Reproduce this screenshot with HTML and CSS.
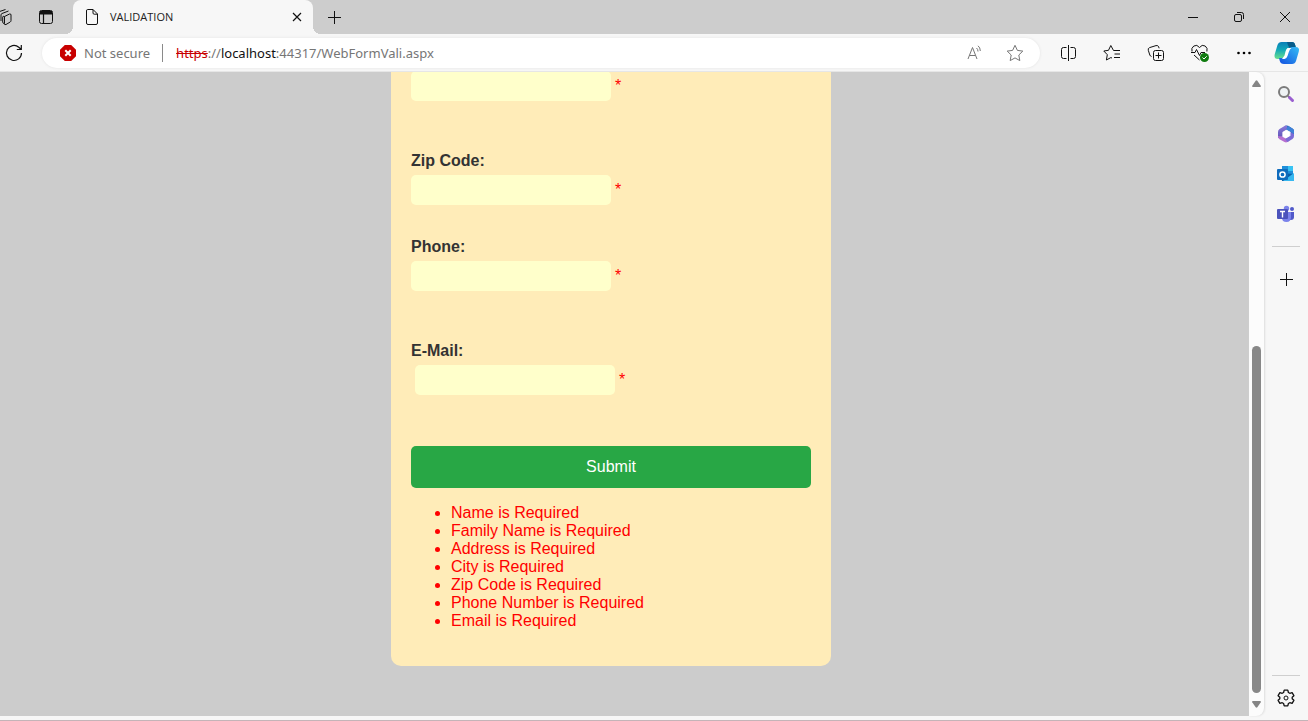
FILE: index.html
```html
<!DOCTYPE html>
<html lang="en">
<head>
<meta charset="utf-8">
<title>VALIDATION</title>
<link rel="stylesheet" href="styles.css">
</head>
<body>
<header class="titlebar">
  <button class="workspaces" aria-label="Workspaces"><svg width="24" height="20" viewBox="0 0 24 20" class="line"><path d="M14.500 9.500l5-2.500q1.500-.5 1.500 1v5.500q0 1-.8 1.500l-4.200 2.500q-1.500.6-1.500-.8zM14.500 9.500q-1.800-.8-1.800.6v5q0 1 1.800 2M11 14V8q0-1 .8-1.400L18.500 4M8.500 12V6q0-1 .8-1.400L15.500 2.500"/></svg></button>
  <button class="tab-actions" aria-label="Tab actions"><svg width="16" height="16" viewBox="0 0 16 16" class="line"><rect x="1.500" y="1.500" width="13" height="13" rx="2"/><path d="M5.500 5v9" stroke-width="1.200"/><path d="M2 2h12v3.500H2z" fill="#111" stroke="none"/></svg></button>
  <div class="tab">
    <svg width="14" height="18" viewBox="0 0 14 18" class="line"><path d="M2.500 1.500H8L12.500 6v9q0 1.500-1.500 1.500H3Q1.500 16.500 1.500 15V3Q1.500 1.500 2.500 1.500zM8 1.500V5q0 1.200 1.200 1.200h3.300"/></svg>
    <span class="tab-title">VALIDATION</span>
    <button class="tab-close" aria-label="Close tab"><svg width="12" height="12" viewBox="0 0 12 12" class="line"><path d="M2 2l8 8M10 2l-8 8" stroke-width="1.200"/></svg></button>
  </div>
  <button class="new-tab" aria-label="New tab"><svg width="15" height="15" viewBox="0 0 15 15" class="line"><path d="M7.500 1v13M1 7.500h13"/></svg></button>
  <div class="window-controls">
    <button aria-label="Minimize"><svg width="12" height="12" viewBox="0 0 12 12" class="line"><path d="M1 6.500h10"/></svg></button>
    <button aria-label="Restore"><svg width="12" height="12" viewBox="0 0 12 12" class="line"><rect x="1.500" y="3.500" width="7" height="7" rx="1.500"/><path d="M4 1.500h4.500q2 0 2 2V8"/></svg></button>
    <button aria-label="Close"><svg width="12" height="12" viewBox="0 0 12 12" class="line"><path d="M1 1l10 10M11 1L1 11"/></svg></button>
  </div>
</header>

<nav class="toolbar" aria-label="Browser toolbar">
  <button class="refresh" aria-label="Refresh"><svg width="20" height="20" viewBox="0 0 20 20" class="line"><path d="M17.500 10a7.500 7.500 0 1 1-2.700-5.800L17 6.300M17.300 2v4.500H12.800" stroke-width="1.200"/></svg></button>
  <div class="address-bar">
    <svg width="16" height="16" viewBox="0 0 16 16"><path d="M4.800 0h6.400L16 4.800v6.400L11.200 16H4.800L0 11.200V4.800z" fill="#c80000"/><path d="M5.300 5.300l5.400 5.400M10.700 5.300l-5.400 5.400" stroke="#fff" stroke-width="2"/></svg>
    <span class="security">Not secure</span>
    <div class="url" role="textbox" aria-label="Address" contenteditable="true" spellcheck="false"><s>https</s>://<b>localhost</b>:44317/WebFormVali.aspx</div>
    <button aria-label="Read aloud"><svg width="18" height="18" viewBox="0 0 18 18" class="line muted"><path d="M2 15L6.500 3.500 11 15M3.600 11.500h5.800M10.500 4q1.500 1.200 1.500 3.500M12 1.800q2.300 1.700 2.300 5.200"/></svg></button>
    <button aria-label="Add to favorites"><svg width="18" height="18" viewBox="0 0 18 18" class="line muted"><path d="M9 1.300l2.400 5.100 5.400.7-4 3.900 1 5.600L9 13.900l-4.800 2.700 1-5.600-4-3.900 5.400-.7z"/></svg></button>
  </div>
  <button aria-label="Split screen"><svg width="17" height="18" viewBox="0 0 17 18" class="line"><path d="M6.500 3.500h-3q-2 0-2 2v7q0 2 2 2h3M10.500 3.500h3q2 0 2 2v7q0 2-2 2h-3M8.500 1v16"/></svg></button>
  <button aria-label="Favorites"><svg width="18" height="18" viewBox="0 0 18 18" class="line"><path d="M17 6.500h-6.500L7.800 1.500 5.500 6.300l-4.700.7 3.500 3.700-.9 5.300 4.400-2.400 1.200.4M11.500 10h5.500M11 13.500h6" stroke-linejoin="round"/></svg></button>
  <button aria-label="Collections"><svg width="18" height="18" viewBox="0 0 18 18" class="line"><rect x="6.500" y="6.500" width="10" height="10" rx="2"/><path d="M11.500 8.500v6M8.500 11.500h6M4.500 12.500q-1.200-.3-1.700-1.500L1.300 6.300q-.6-2 1.300-2.700L9 1.600q2-.6 2.700 1.300l.4 1.400"/></svg></button>
  <button aria-label="Browser essentials"><svg width="20" height="20" viewBox="0 0 20 20" class="line"><path d="M9.500 4.500Q7 1 3.800 3 .9 5 2 8.500M9.500 4.500Q12 1 15.200 3q2.800 2 1.700 5.500M1 9.500h4l1.500-3 3 6 1.500-3h4M4 12l5.500 5"/><circle cx="14.500" cy="14.500" r="4.500" fill="#107c10" stroke="none"/><path d="M12.500 14.500l1.500 1.500 2.700-2.700" stroke="#fff"/></svg></button>
  <button aria-label="Settings and more"><svg width="16" height="16" viewBox="0 0 16 16"><circle cx="2.500" cy="8" r="1.300"/><circle cx="8" cy="8" r="1.300"/><circle cx="13.500" cy="8" r="1.300"/></svg></button>
  <button class="copilot" aria-label="Copilot"><svg width="26" height="24" viewBox="0 0 26 24"><defs><linearGradient id="cop-a" x1="0" y1="0" x2="0" y2="1"><stop offset="0" stop-color="#0a7fb8"/><stop offset=".45" stop-color="#12a8b8"/><stop offset="1" stop-color="#6be08c"/></linearGradient><linearGradient id="cop-b" x1="1" y1="0" x2="0" y2="1"><stop offset="0" stop-color="#35bdf5"/><stop offset="1" stop-color="#1450e0"/></linearGradient></defs><path d="M7.500 1H18q2.500 0 3.200 3l1 4H17q-2.500 0-3.500 3l-1.500 4q-1 3-4 3H3.500Q-.4 18 .8 13L3.500 4Q4.500 1 7.500 1z" fill="url(#cop-a)"/><path d="M13 1h5q2.500 0 3.200 3l1 4H17q-2.500-1-4-7z" fill="#085c8a"/><path d="M18.500 6h3q4.500 0 3.300 4.500L22 20q-1 3-4 3h-8q-3.500 0-4.200-3L5 17h3q3 0 4-3l1.500-4Q15 6 18.500 6z" fill="url(#cop-b)"/><path d="M13.500 7h4q-1.800 1-2.700 4l-1.300 4q-.8 2.500-3 3H8l2.500-3.500 1-4Q12 8 13.500 7z" fill="#fff"/></svg></button>
</nav>

<div class="workspace">
  <main class="viewport">
    <form class="form-card">
      <div class="field spaced"><div class="entry"><input type="text" aria-label="City"><span class="error">*</span></div></div>
      <div class="field"><label for="zip">Zip Code:</label><div class="entry"><input id="zip" type="text"><span class="error">*</span></div></div>
      <div class="field spaced"><label for="phone">Phone:</label><div class="entry"><input id="phone" type="text"><span class="error">*</span></div></div>
      <div class="field spaced"><label for="email">E-Mail:</label><div class="entry indented"><input id="email" type="text"><span class="error">*</span></div></div>
      <button class="submit" type="button">Submit</button>
      <ul class="summary">
        <li>Name is Required</li>
        <li>Family Name is Required</li>
        <li>Address is Required</li>
        <li>City is Required</li>
        <li>Zip Code is Required</li>
        <li>Phone Number is Required</li>
        <li>Email is Required</li>
      </ul>
    </form>
  </main>
  <div class="scrollbar" aria-hidden="true">
    <svg width="9" height="8" viewBox="0 0 9 8"><path d="M3.700.7q.8-.9 1.600 0l3.500 5q.5 1.300-.8 1.300H1Q-.3 7 .2 5.700z" fill="#858585"/></svg>
    <div class="track"><div class="thumb"></div></div>
    <svg width="9" height="8" viewBox="0 0 9 8"><path d="M3.700 7.300q.8.900 1.600 0l3.500-5Q9.300 1 8 1H1Q-.3 1 .2 2.300z" fill="#858585"/></svg>
  </div>
  <aside class="sidebar" aria-label="Sidebar">
    <button aria-label="Search"><svg width="18" height="18" viewBox="0 0 18 18"><circle cx="7" cy="7" r="5" fill="#eef2f4" stroke="#7b7b7b" stroke-width="2"/><path d="M11 11l1.500 1.500" stroke="#777" stroke-width="2"/><path d="M12.500 12.500l3 3" stroke="#9a5fd0" stroke-width="3" stroke-linecap="round"/></svg></button>
    <button aria-label="Microsoft 365"><svg width="18" height="18" viewBox="0 0 18 18"><defs><linearGradient id="m-a" x1="0" y1="0" x2="0" y2="1"><stop offset="0" stop-color="#8a78d8"/><stop offset="1" stop-color="#5f55b8"/></linearGradient></defs><path d="M8 .8q1.500-.6 3 0L15.500 3.500Q17 4.300 17 6v5l-3-1V7L7 3z" fill="#2b62b4"/><path d="M8 .8L2.500 4Q1 5 1 7v6l4.500-1.500V7L10 4.300V.8z" fill="url(#m-a)"/><path d="M1 11q0 2.300 1.500 3.200l5 2.800q1.500.8 3 0l2-1.200V12L9 13.800 5 11.500z" fill="#b66fd0"/><path d="M17 9v2q0 2-1.500 3l-5 3L8 14l5.500-3.200V7z" fill="#7b6cd6"/><path d="M11 .8l4.500 2.700Q17 4.300 17 6v3l-3-2-5-2.800z" fill="#3e82d8"/><path d="M9 5.500l3.300 1.700v3.900L9 13l-3.300-1.900V7.200z" fill="#fff"/></svg></button>
    <button aria-label="Outlook"><svg width="18" height="18" viewBox="0 0 18 18"><path d="M5 1h11v9H5z" fill="#1e8fda"/><path d="M11 1h5v5h-5z" fill="#38c3f3"/><path d="M4 8l13 1v7H5z" fill="#0a5fa8"/><path d="M17 8v8H6z" fill="#37b8f0"/><rect y="4" width="11" height="11" rx="1" fill="#0f6cbd"/><circle cx="5.500" cy="9.500" r="2.600" fill="none" stroke="#fff" stroke-width="1.500"/></svg></button>
    <button aria-label="Teams"><svg width="18" height="18" viewBox="0 0 18 18"><circle cx="9.500" cy="3.500" r="2.700" fill="#7b83eb"/><circle cx="15" cy="4" r="2" fill="#5059c9"/><path d="M12 7h5v5q0 3-3 3h-2z" fill="#5059c9"/><path d="M5 7h9v5q0 5-4.500 5T5 13z" fill="#7b83eb"/><rect y="4" width="11" height="10" rx="1" fill="#4b53bc"/><path d="M3 6.500h5M5.500 6.500v6" stroke="#fff" stroke-width="1.400"/></svg></button>
    <hr>
    <button class="add" aria-label="Customize"><svg width="13" height="13" viewBox="0 0 13 13" class="line"><path d="M6.500 0v13M0 6.500h13"/></svg></button>
    <hr class="bottom-rule">
    <button class="settings" aria-label="Settings"><svg width="18" height="18" viewBox="0 0 18 18" class="line"><path d="M7.200 1.200h3.600l.6 2.300 1.400.8 2.300-.7 1.800 3.100L15.200 8.300v1.400l1.700 1.600-1.800 3.100-2.300-.7-1.400.8-.6 2.300H7.200l-.6-2.300-1.400-.8-2.300.7-1.800-3.100 1.700-1.600V8.300L1.100 6.700l1.800-3.100 2.300.7 1.400-.8z" stroke-width="1.300" stroke-linejoin="round"/><circle cx="9" cy="9" r="2"/></svg></button>
  </aside>
</div>
</body>
</html>
```
FILE: styles.css
```css
* { box-sizing: border-box; }

body {
  margin: 0;
  height: 100vh;
  display: flex;
  flex-direction: column;
  overflow: hidden;
  background: #f7f7f7;
  border-bottom: 1px solid #c4b4b8;
  font-family: "Noto Sans", "Open Sans", sans-serif;
}

button {
  display: flex;
  align-items: center;
  justify-content: center;
  padding: 0;
  border: 0;
  background: none;
  flex: none;
}

svg { display: block; flex: none; }

.line { fill: none; stroke: #111; stroke-width: 1; }
.muted { stroke: #767676; }

/* Title bar */
.titlebar {
  display: flex;
  height: 34px;
  flex: none;
  background: #cdcdcd;
}

.workspaces { width: 28px; justify-content: flex-end; margin-left: -14px; }
.tab-actions { width: 32px; margin: 0 19px 0 16px; justify-content: center; }

.tab {
  position: relative;
  display: flex;
  align-items: center;
  width: 240px;
  margin-left: -8px;
  padding: 0 8px 0 12px;
  gap: 11px;
  border-radius: 8px 8px 0 0;
  background: #f7f7f7;
}

.tab::before,
.tab::after {
  content: "";
  position: absolute;
  bottom: 0;
  width: 8px;
  height: 8px;
}

.tab::before { right: 100%; background: radial-gradient(circle at 0 0, transparent 8px, #f7f7f7 8px); }
.tab::after { left: 100%; background: radial-gradient(circle at 100% 0, transparent 8px, #f7f7f7 8px); }

.tab-title { flex: 1; font-family: "Open Sans", sans-serif; font-size: 11px; line-height: 16px; color: #222; }
.tab-close { width: 16px; height: 16px; }
.new-tab { width: 43px; }

.window-controls { display: flex; margin-left: auto; }
.window-controls button { width: 46px; }

/* Toolbar */
.toolbar {
  display: flex;
  align-items: center;
  height: 38px;
  flex: none;
  border-bottom: 1px solid #e6e6e6;
}

.toolbar > button { width: 44px; height: 30px; }
.toolbar > .refresh { width: 28px; margin-right: 14px; }
.toolbar > .copilot { width: 42px; }

.address-bar {
  display: flex;
  align-items: center;
  flex: 1;
  min-width: 0;
  height: 30px;
  margin-right: 6px;
  padding: 0 5px 0 18px;
  border-radius: 15px;
  background: #fff;
  box-shadow: 0 0 3px #e2e2e2;
  font-size: 13px;
  line-height: 18px;
  color: #767676;
}

.address-bar button { width: 40px; height: 30px; }

.security {
  margin: 0 13px 0 8px;
  padding-right: 12px;
  border-right: 1px solid #8a8a8a;
  white-space: nowrap;
}

.url { flex: 1; min-width: 0; overflow: hidden; white-space: nowrap; }
.url s { color: #c80000; }
.url b { font-weight: 400; color: #111; }

/* Page area */
.workspace {
  display: flex;
  flex: 1;
  min-height: 0;
}

.viewport {
  display: flex;
  flex-direction: column;
  justify-content: flex-end;
  align-items: center;
  flex: 1;
  min-width: 0;
  margin-bottom: 4px;
  padding: 0 27px 50px 0;
  overflow: hidden;
  background: #ccc;
  font-family: "Liberation Sans", Arial, sans-serif;
  font-size: 16px;
  line-height: 18px;
}

.form-card {
  width: 100%;
  max-width: 440px;
  padding: 20px;
  border-radius: 10px;
  background: #ffecb8;
}

.field { margin-bottom: 33px; }
.field.spaced { margin-bottom: 51px; }

.field label {
  display: block;
  margin-bottom: 5px;
  font-weight: 700;
  color: #333;
}

.entry { display: flex; align-items: center; gap: 4px; }
.entry.indented { padding-left: 4px; }

.entry input {
  width: 200px;
  height: 30px;
  padding: 5px;
  border: 0;
  border-radius: 5px;
  background: #ffffcb;
}

.error { color: #f00; }

.submit {
  width: 100%;
  height: 42px;
  border-radius: 5px;
  background: #28a745;
  color: #fff;
  font-family: inherit;
  font-size: 16px;
}

.summary {
  margin: 16px 0;
  padding-left: 40px;
  color: #f00;
}

/* Scrollbar */
.scrollbar {
  display: flex;
  flex-direction: column;
  align-items: center;
  justify-content: space-between;
  flex: none;
  width: 15px;
  margin-bottom: 4px;
  padding: 8px 0;
  border-radius: 0 8px 8px 0;
  background: #fcfcfc;
  box-shadow: 1px 0 2px #ddd;
}

.track {
  display: flex;
  flex-direction: column;
  justify-content: flex-end;
  flex: 1;
  padding: 7px 0;
}

.thumb { width: 9px; height: 58%; border-radius: 5px; background: #888; }

/* Sidebar */
.sidebar {
  display: flex;
  flex-direction: column;
  align-items: center;
  flex: none;
  width: 44px;
  padding: 2px 0;
}

.sidebar button { width: 44px; height: 40px; }
.sidebar hr { width: 28px; height: 1px; margin: 12px 0; border: 0; background: #cfcfcf; flex: none; }
.sidebar .bottom-rule { margin: auto 0 2px; }
```
